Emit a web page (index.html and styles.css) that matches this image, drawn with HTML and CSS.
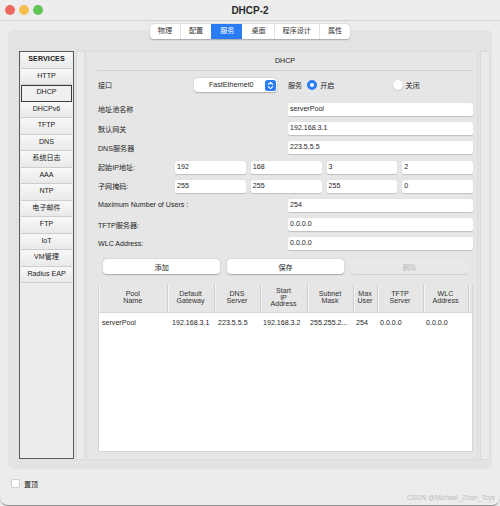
FILE: index.html
```html
<!DOCTYPE html>
<html lang="zh">
<head>
<meta charset="utf-8">
<title>DHCP-2</title>
<link rel="stylesheet" href="styles.css">
</head>
<body>
<div class="window">
  <header class="titlebar">
    <div class="lights"><span class="light red"></span><span class="light yellow"></span><span class="light green"></span></div>
    <div class="title">DHCP-2</div>
    <div></div>
  </header>
  <nav class="tabs">
    <span class="tab">物理</span>
    <span class="tab">配置</span>
    <span class="tab active">服务</span>
    <span class="tab">桌面</span>
    <span class="tab">程序设计</span>
    <span class="tab">属性</span>
  </nav>
  <main class="panel">
    <aside class="services">
      <div class="svc head">SERVICES</div>
      <div class="svc">HTTP</div>
      <div class="svc selected">DHCP</div>
      <div class="svc">DHCPv6</div>
      <div class="svc">TFTP</div>
      <div class="svc">DNS</div>
      <div class="svc">系统日志</div>
      <div class="svc">AAA</div>
      <div class="svc">NTP</div>
      <div class="svc">电子邮件</div>
      <div class="svc">FTP</div>
      <div class="svc">IoT</div>
      <div class="svc">VM管理</div>
      <div class="svc">Radius EAP</div>
    </aside>
    <div class="lane"></div>
    <section class="frame">
      <div class="frame-title">DHCP</div>
      <div class="row first">
        <span class="lbl iface">接口</span>
        <div class="select"><span class="select-text">FastEthernet0</span><span class="stepper"><svg width="11" height="11" viewBox="0 0 11 11"><rect width="11" height="11" rx="2.5" fill="#2a7cf4"/><path d="M3.3 4.4 L5.5 2.3 L7.7 4.4 M3.3 6.6 L5.5 8.7 L7.7 6.6" fill="none" stroke="#fff" stroke-width="1.1" stroke-linecap="round" stroke-linejoin="round"/></svg></span></div>
        <span class="svc-lbl">服务</span>
        <span class="radio on"></span><span class="opt">开启</span>
        <span class="radio off"></span><span class="opt">关闭</span>
      </div>
      <div class="row"><span class="lbl">地址池名称</span><div class="field">serverPool</div></div>
      <div class="row"><span class="lbl">默认网关</span><div class="field">192.168.3.1</div></div>
      <div class="row"><span class="lbl">DNS服务器</span><div class="field">223.5.5.5</div></div>
      <div class="row quad"><span class="lbl short">起始IP地址:</span><div class="field">192</div><div class="field">168</div><div class="field">3</div><div class="field">2</div></div>
      <div class="row quad"><span class="lbl short">子网掩码:</span><div class="field">255</div><div class="field">255</div><div class="field">255</div><div class="field">0</div></div>
      <div class="row"><span class="lbl">Maximum Number of Users :</span><div class="field">254</div></div>
      <div class="row"><span class="lbl">TFTP服务器:</span><div class="field">0.0.0.0</div></div>
      <div class="row"><span class="lbl">WLC Address:</span><div class="field">0.0.0.0</div></div>
      <div class="buttons">
        <button class="btn">添加</button>
        <button class="btn">保存</button>
        <button class="btn" disabled>删除</button>
      </div>
      <div class="pool-table">
        <table>
          <colgroup>
            <col class="c-pool"><col class="c-gw"><col class="c-dns"><col class="c-start"><col class="c-mask"><col class="c-max"><col class="c-tftp"><col class="c-wlc"><col class="c-end">
          </colgroup>
          <thead>
            <tr>
              <th>Pool<br>Name</th>
              <th>Default<br>Gateway</th>
              <th>DNS<br>Server</th>
              <th>Start<br>IP<br>Address</th>
              <th>Subnet<br>Mask</th>
              <th>Max<br>User</th>
              <th>TFTP<br>Server</th>
              <th>WLC<br>Address</th>
              <th class="end"></th>
            </tr>
          </thead>
          <tbody>
            <tr>
              <td>serverPool</td>
              <td>192.168.3.1</td>
              <td class="dns">223.5.5.5</td>
              <td>192.168.3.2</td>
              <td>255.255.2...</td>
              <td>254</td>
              <td>0.0.0.0</td>
              <td>0.0.0.0</td>
              <td></td>
            </tr>
          </tbody>
        </table>
      </div>
    </section>
    <div class="lane right"></div>
  </main>
  <footer class="footer">
    <label class="pin"><span class="check"></span><span>置顶</span></label>
    <div class="mark">CSDN @Michael_Zhan_Tcys</div>
  </footer>
</div>
</body>
</html>
```

FILE: styles.css
```css
* { box-sizing: border-box; }

body {
  margin: 0;
  width: 500px;
  height: 506px;
  overflow: hidden;
  background: #ececec;
  font-family: "Liberation Sans", "Noto Sans CJK SC", sans-serif;
  font-size: 7.1px;
  color: #1e1e1e;
}

.window {
  height: 506px;
  display: flex;
  flex-direction: column;
  background: #ececec;
  border-bottom: 1px solid #8f8f8f;
  border-radius: 0 0 8px 8px;
}

.titlebar {
  height: 21px;
  flex: none;
  display: grid;
  grid-template-columns: 1fr auto 1fr;
  align-items: center;
  background: #ededed;
  border-bottom: 1px solid #d2d2d2;
}

.lights { display: flex; gap: 4px; padding-left: 5px; }
.light { width: 10px; height: 10px; border-radius: 50%; }
.red { background: #ee6a5f; }
.yellow { background: #f5bd4f; }
.green { background: #61c555; }

.title {
  font-size: 10px;
  font-weight: bold;
  color: #2a2a2a;
}

.tabs {
  position: relative;
  z-index: 1;
  align-self: center;
  display: flex;
  margin-top: 3px;
  height: 15px;
  background: #fff;
  border-radius: 4px;
  box-shadow: 0 0.5px 1.5px rgba(0, 0, 0, 0.28);
  overflow: hidden;
}

.tab {
  padding: 0 8px;
  line-height: 15px;
  color: #333;
  border-left: 1px solid #e2e2e2;
}
.tab:first-child { border-left: none; }
.tab.active { background: #2a7cf4; color: #fff; border-left-color: #2a7cf4; }
.tab.active + .tab { border-left-color: transparent; }

.panel {
  margin: -9px 8px 0;
  height: 439px;
  flex: none;
  display: flex;
  padding: 21px 2px 9px 11px;
  background: #e3e3e3;
  border-radius: 5px;
}

.services {
  width: 55px;
  flex: none;
  margin-bottom: 1px;
  border: 1px solid #5a5a5a;
  background: #ececec;
  padding: 0 1px;
}

.svc {
  height: 16.5px;
  line-height: 15px;
  text-align: center;
  color: #222;
  background: linear-gradient(#f8f8f8, #e9e9e9);
  border-bottom: 1.5px solid #cdcdcd;
}
.svc.head { font-weight: bold; letter-spacing: 0.1px; }
.svc.selected {
  border: 1px solid #3c3c3c;
  line-height: 13px;
  background: #f0f0f0;
}

.lane {
  width: 9px;
  flex: none;
  margin-left: 2px;
  background: #ebebeb;
  border: 1px solid #dadada;
}
.lane.right { width: 10px; margin-left: 2px; }

.frame {
  width: 392px;
  flex: none;
  margin-left: 1px;
  display: flex;
  flex-direction: column;
  padding: 4px 4px 7px 11px;
  background: #e6e6e6;
  border: 1px solid #dcdcdc;
}

.frame-title {
  height: 15px;
  line-height: 10px;
  text-align: center;
  border-bottom: 1px solid #d2d2d2;
  margin-left: -1px;
}

.row {
  display: flex;
  align-items: center;
  height: 13px;
  margin-top: 6.2px;
}
.row.first { height: 14px; margin-top: 7px; margin-bottom: 4.8px; }

.lbl { width: 190px; flex: none; }
.lbl.short { width: 77px; }
.lbl.iface { width: 96px; }

.field {
  flex: 1;
  height: 13px;
  line-height: 13px;
  padding-left: 2px;
  background: #fff;
  border-radius: 2px;
  box-shadow: 0 0.6px 0.8px rgba(0, 0, 0, 0.16);
}
.row.quad { gap: 5px; }
.row.quad .lbl { margin-right: -5px; }

.select {
  width: 83px;
  height: 14px;
  flex: none;
  display: flex;
  align-items: center;
  justify-content: space-between;
  padding: 0 1px 0 15px;
  background: #fff;
  border-radius: 4px;
  box-shadow: 0 0.5px 1.5px rgba(0, 0, 0, 0.25);
}
.stepper { display: flex; }

.svc-lbl { margin-left: 11px; }

.radio {
  width: 10px;
  height: 10px;
  flex: none;
  border-radius: 50%;
}
.radio.on {
  margin-left: 5px;
  background: #fff;
  border: 3px solid #2a7cf4;
}
.radio.off {
  margin-left: 59px;
  background: #fff;
  box-shadow: 0 0.5px 1.5px rgba(0, 0, 0, 0.25);
}
.opt { margin-left: 3px; }
.radio.off + .opt { margin-left: 2px; }

.buttons {
  display: flex;
  gap: 6.5px;
  padding: 0 5px;
  margin-top: 9px;
}

.btn {
  flex: 1;
  height: 15px;
  padding: 0;
  font: inherit;
  color: #222;
  background: #fff;
  border: none;
  border-radius: 4px;
  box-shadow: 0 0.5px 1.5px rgba(0, 0, 0, 0.28);
}
.btn:disabled {
  color: #b9b9b9;
  background: #e9e9e9;
  box-shadow: 0 0.5px 1px rgba(0, 0, 0, 0.1);
}

.pool-table {
  margin-top: 10px;
  flex: 1;
  background: #fff;
  border: 1px solid #d6d6d6;
  border-top: none;
}

table {
  width: 100%;
  table-layout: fixed;
  border-collapse: collapse;
}

.c-pool { width: 68px; }
.c-gw { width: 47px; }
.c-dns { width: 46px; }
.c-start { width: 47px; }
.c-mask { width: 46px; }
.c-max { width: 24px; }
.c-tftp { width: 46px; }
.c-wlc { width: 45px; }
.c-end { width: 4px; }

th {
  height: 28px;
  padding: 0;
  font-weight: normal;
  line-height: 6.8px;
  color: #333;
  text-align: center;
  vertical-align: middle;
  background: #e6e6e6;
  border-right: 1px solid #cfcfcf;
  border-bottom: 1px solid #d8d8d8;
  box-shadow: inset 1px 0 0 #f4f4f4;
}
th.end { border-right: none; }

td {
  padding: 5px 0 0 3px;
  line-height: 10px;
  white-space: nowrap;
  overflow: hidden;
  color: #1e1e1e;
}
td:nth-child(2) { padding-left: 5px; }
td.dns { padding-left: 4px; }

.footer {
  flex: 1;
  display: flex;
  flex-direction: column;
  padding: 10px 5px 0 11px;
}

.pin {
  display: flex;
  align-items: center;
  gap: 4px;
  height: 9px;
}
.check {
  width: 9px;
  height: 9px;
  background: #fff;
  border: 0.5px solid #cfcfcf;
  border-radius: 2px;
}

.mark {
  margin-top: auto;
  margin-bottom: 4px;
  align-self: flex-end;
  font-size: 6.8px;
  color: #bdbdbd;
}
```
